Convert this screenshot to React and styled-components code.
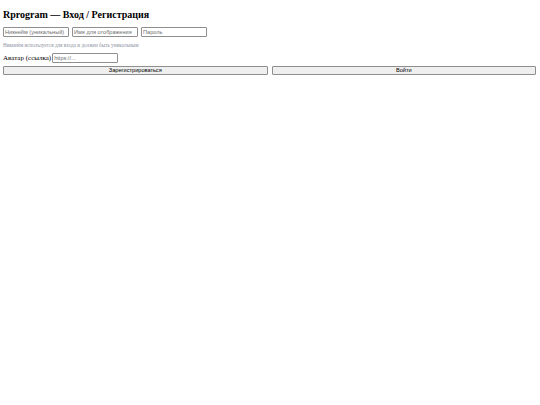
import React, { useState } from "react";
import styled, { createGlobalStyle } from "styled-components";

const GlobalStyle = createGlobalStyle`
    body {
        margin: 3px 4px 3px 3px;
        font-family: "Liberation Serif", serif;
        font-size: 7px;
        color: #000;
        background: #fff;
    }
`;

const App = () => {
    const [nick, setNick] = useState("");
    const [name, setName] = useState("");
    const [pass, setPass] = useState("");
    const [avatar, setAvatar] = useState("");

    return (
        <Page>
            <GlobalStyle />
            <Title>Rprogram — Вход / Регистрация</Title>
            <FieldsRow>
                <TextInput
                    placeholder="Никнейм (уникальный)"
                    value={nick}
                    onChange={(e) => setNick(e.target.value)}
                />
                <TextInput
                    placeholder="Имя для отображения"
                    value={name}
                    onChange={(e) => setName(e.target.value)}
                />
                <TextInput
                    type="password"
                    placeholder="Пароль"
                    value={pass}
                    onChange={(e) => setPass(e.target.value)}
                />
            </FieldsRow>
            <Hint>Никнейм используется для входа и должен быть уникальным</Hint>
            <AvatarRow>
                <label>Аватар (ссылка)</label>
                <TextInput
                    placeholder="https://..."
                    value={avatar}
                    onChange={(e) => setAvatar(e.target.value)}
                />
            </AvatarRow>
            <Buttons>
                <ActionButton>Зарегистрироваться</ActionButton>
                <ActionButton>Войти</ActionButton>
            </Buttons>
        </Page>
    );
};

// Styles
const Page = styled.div`
    display: flex;
    flex-direction: column;
`;

const Title = styled.h1`
    font-size: 10px;
    font-weight: bold;
    margin: 6px 0 6px 0;
    line-height: 12px;
`;

const FieldsRow = styled.div`
    display: flex;
    gap: 3px;
`;

const TextInput = styled.input`
    width: 62px;
    height: 8px;
    box-sizing: content-box;
    padding: 0 1px;
    border: 1px solid #8f8f8f;
    border-radius: 1px;
    font-family: "Liberation Sans", Arial, sans-serif;
    font-size: 5.6px;
    color: #000;
    outline: none;

    &::placeholder {
        color: #6f6f6f;
    }
`;

const Hint = styled.div`
    margin-top: 5px;
    font-size: 5.2px;
    line-height: 6px;
    color: #8c93a3;
`;

const AvatarRow = styled.div`
    display: flex;
    align-items: center;
    gap: 1px;
    margin-top: 5px;
    font-size: 7px;
`;

const Buttons = styled.div`
    display: flex;
    gap: 4px;
    margin-top: 3px;
`;

const ActionButton = styled.button`
    flex: 1;
    height: 9px;
    padding: 0;
    font-family: "Liberation Sans", Arial, sans-serif;
    font-size: 5.6px;
    line-height: 7px;
    background-color: #efefef;
    border: 1px solid #8f8f8f;
    border-radius: 1px;
    color: #000;
`;

export default App;
